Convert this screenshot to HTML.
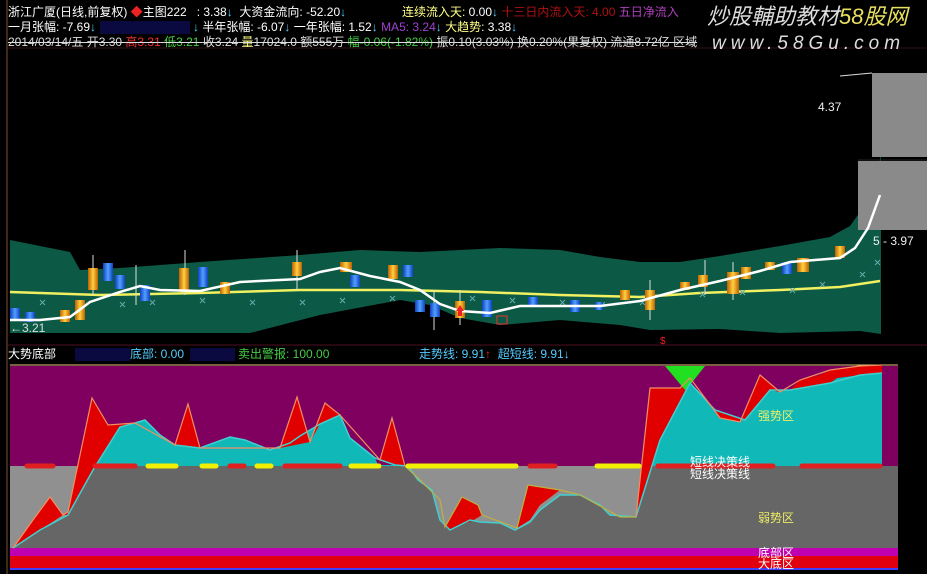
<!DOCTYPE html><html><head><meta charset="utf-8"><style>
body{margin:0;background:#000;width:927px;height:574px;overflow:hidden;position:relative;font-family:"Liberation Sans","Noto Sans CJK SC",sans-serif}
.t{position:absolute;font-size:12px;white-space:nowrap;line-height:13px}
</style></head><body>
<svg width="927" height="574" style="position:absolute;left:0;top:0">
<defs><linearGradient id="og" x1="0" x2="1"><stop offset="0" stop-color="#c06000"/><stop offset=".5" stop-color="#ffd040"/><stop offset="1" stop-color="#c06000"/></linearGradient>
<linearGradient id="bg" x1="0" x2="1"><stop offset="0" stop-color="#1040c0"/><stop offset=".5" stop-color="#50a0ff"/><stop offset="1" stop-color="#1040c0"/></linearGradient></defs>
<line x1="7" y1="0" x2="7" y2="574" stroke="#805030"/>
<line x1="8" y1="48" x2="927" y2="48" stroke="#301010"/>
<polygon fill="#0c5a46" points="10,240 70,252 80,270 120,268 200,262 300,255 360,250 420,252 500,248 560,250 600,257 640,262 680,262 720,256 780,246 830,237 850,226 865,205 875,180 881,155 881,334 860,331 780,333 720,329 650,330 620,325 560,320 500,325 460,318 430,305 400,300 320,315 250,333 10,333"/>
<rect x="872" y="73" width="55" height="84" fill="#8a8a8a"/>
<rect x="858" y="161" width="69" height="69" fill="#8a8a8a"/>
<line x1="858" y1="160" x2="927" y2="160" stroke="#222"/>
<line x1="840" y1="76" x2="872" y2="73" stroke="#ddd"/>
<polyline fill="none" stroke="#f0f060" stroke-width="2.5" points="10,292 100,295 200,293 300,290 400,290 480,292 560,295 640,297 700,293 780,290 840,287 880,281"/>
<g fill="none" stroke="#6aa" stroke-width="1">
<path d="M40,300l5,5m0-5l-5,5M120,302l5,5m0-5l-5,5M150,300l5,5m0-5l-5,5M200,298l5,5m0-5l-5,5M250,300l5,5m0-5l-5,5M300,300l5,5m0-5l-5,5M340,298l5,5m0-5l-5,5M390,296l5,5m0-5l-5,5M470,296l5,5m0-5l-5,5M510,298l5,5m0-5l-5,5M560,300l5,5m0-5l-5,5M600,302l5,5m0-5l-5,5M640,300l5,5m0-5l-5,5M700,292l5,5m0-5l-5,5M740,290l5,5m0-5l-5,5M790,288l5,5m0-5l-5,5M820,282l5,5m0-5l-5,5M860,272l5,5m0-5l-5,5M875,260l5,5m0-5l-5,5"/></g>
<g stroke="#ddd">
<line x1="93" y1="255" x2="93" y2="295"/><line x1="185" y1="250" x2="185" y2="295"/><line x1="297" y1="250" x2="297" y2="290"/><line x1="460" y1="290" x2="460" y2="325"/><line x1="650" y1="280" x2="650" y2="320"/><line x1="705" y1="260" x2="705" y2="295"/><line x1="733" y1="262" x2="733" y2="300"/><line x1="136" y1="265" x2="136" y2="305"/><line x1="434" y1="290" x2="434" y2="330"/>
</g>
<g fill="url(#og)">
<rect x="88" y="268" width="10" height="22"/><rect x="179" y="268" width="10" height="24"/><rect x="292" y="262" width="10" height="14"/><rect x="388" y="265" width="10" height="14"/><rect x="455" y="301" width="10" height="17"/><rect x="645" y="290" width="10" height="20"/><rect x="698" y="275" width="10" height="12"/><rect x="727" y="272" width="12" height="22"/><rect x="741" y="267" width="10" height="12"/><rect x="765" y="262" width="10" height="8"/><rect x="797" y="258" width="12" height="14"/><rect x="835" y="246" width="10" height="12"/><rect x="60" y="310" width="10" height="12"/><rect x="75" y="300" width="10" height="20"/><rect x="220" y="282" width="10" height="12"/><rect x="340" y="262" width="12" height="10"/><rect x="620" y="290" width="10" height="10"/><rect x="680" y="282" width="10" height="8"/>
</g>
<g fill="url(#bg)">
<rect x="103" y="263" width="10" height="18"/><rect x="115" y="275" width="10" height="14"/><rect x="140" y="285" width="10" height="16"/><rect x="198" y="267" width="10" height="20"/><rect x="350" y="275" width="10" height="12"/><rect x="403" y="265" width="10" height="12"/><rect x="415" y="300" width="10" height="12"/><rect x="430" y="303" width="10" height="14"/><rect x="482" y="300" width="10" height="17"/><rect x="528" y="297" width="10" height="10"/><rect x="570" y="300" width="10" height="12"/><rect x="782" y="262" width="10" height="12"/><rect x="10" y="308" width="10" height="12"/><rect x="25" y="312" width="10" height="10"/><rect x="595" y="302" width="8" height="8"/>
</g>
<rect x="497" y="316" width="10" height="8" fill="none" stroke="#e33"/>
<polyline fill="none" stroke="#fff" stroke-width="2.5" points="10,320 40,320 70,317 90,302 120,292 140,286 160,290 200,291 240,282 300,279 320,272 340,268 370,276 400,282 420,290 440,304 460,311 490,313 520,306 560,306 600,306 640,301 680,290 720,281 760,271 790,262 840,258 855,248 868,228 880,195"/>
<path d="M456,311l4,-6l4,6h-2v5h-4v-5z" fill="#e22"/>
<text x="660" y="344" fill="#e22" font-size="10">$</text>
<line x1="8" y1="345" x2="927" y2="345" stroke="#501020"/>
<!-- lower panel -->
<rect x="10" y="366" width="888" height="100" fill="#800060"/>
<rect x="10" y="466" width="888" height="82" fill="#666"/>
<rect x="10" y="548" width="888" height="8" fill="#c000b0"/>
<rect x="10" y="556" width="888" height="12" fill="#e00010"/>
<rect x="10" y="568" width="888" height="2" fill="#4040ff"/>
<line x1="10" y1="365" x2="898" y2="365" stroke="#f0c080"/>
<polygon fill="#909090" points="10,466 93,466 93,470 68,515 40,530 13,548 10,548"/>
<polygon fill="#909090" points="408,466 645,466 636,517 610,515 600,505 580,495 560,495 540,510 530,522 515,530 500,523 480,522 470,520 460,525 450,530 440,520 432,490 418,480"/>
<polygon fill="#10b8b8" points="93,466 120,427 135,423 145,420 160,435 175,445 200,448 230,437 245,440 270,450 290,443 300,436 320,424 340,415 350,438 375,458 378,465 395,465 408,466"/>
<polygon fill="#10b8b8" points="648,466 660,440 690,383 715,410 725,415 745,420 770,390 790,390 830,383 837,378 860,375 882,373 882,466"/>
<polygon fill="#e00000" points="13,548 33,520 50,497 63,515 40,530"/>
<polygon fill="#e00000" points="63,515 68,512 92,398 108,425 135,423 120,427 93,470 68,515"/>
<polygon fill="#e00000" points="175,445 188,404 200,448"/>
<polygon fill="#e00000" points="280,448 297,397 310,442"/>
<polygon fill="#e00000" points="310,442 325,403 340,415 320,424"/>
<polygon fill="#e00000" points="380,460 392,418 405,466 395,465"/>
<polygon fill="#e00000" points="445,527 462,497 478,505 482,515 472,521 460,525 450,530"/>
<polygon fill="#e00000" points="517,528 528,485 560,490 540,505 530,520"/>
<polygon fill="#e00000" points="636,517 650,388 680,388 690,383 660,440"/>
<polygon fill="#e00000" points="715,410 720,418 740,422 760,375 780,392 770,390 745,420"/>
<polygon fill="#e00000" points="790,390 800,380 820,375 830,370 860,366 882,365 882,373 860,375 837,378 830,383"/>
<polygon fill="#20e020" points="665,366 705,366 690,385 685,390"/>
<polyline fill="none" stroke="#40d0d0" stroke-width="1.5" points="13,548 40,530 68,515 93,470 120,427 135,423 145,420 160,435 175,445 200,448 230,437 245,440 270,450 290,443 300,436 320,424 340,415 350,438 375,458 395,465 408,466 418,480 432,490 440,520 450,530 460,525 470,520 480,522 500,523 515,530 530,522 540,510 560,495 580,495 600,505 610,515 636,517 660,440 690,383 715,410 745,420 770,390 790,390 830,383 860,375 882,373"/>
<polyline fill="none" stroke="#f09060" stroke-width="1.2" points="13,548 33,520 50,497 63,515 68,512 92,398 108,425 135,423 175,445 188,404 200,448 280,448 297,397 310,442 325,403 340,415 380,460 392,418 405,466"/>
<polyline fill="none" stroke="#c0b040" stroke-width="1.2" points="405,466 418,478 440,500 445,527 462,497 478,505 482,515 517,528 528,485 560,490 580,495 620,517 636,517"/>
<polyline fill="none" stroke="#f09060" stroke-width="1.2" points="636,517 650,388 680,388 690,378 720,418 740,422 760,375 780,392 800,380 830,370 860,366 882,365"/>
<g stroke-width="5" stroke-linecap="round">
<path stroke="#e02020" d="M27,466h26M95,466h40M230,466h14M285,466h55M530,466h25M658,466h115M802,466h78"/>
<path stroke="#f0f000" d="M148,466h28M202,466h14M257,466h14M351,466h28M408,466h108M597,466h42"/>
</g>
</svg>
<div class="t" style="left:8px;top:6px;color:#fff">浙江广厦(日线,前复权) <span style="color:#e22">◆</span>主图222 &nbsp;&nbsp;: 3.38<span style="color:#5cf">↓</span> &nbsp;大资金流向: -52.20<span style="color:#5cf">↓</span></div>
<div class="t" style="left:402px;top:6px;color:#ff8">连续流入天: <span style="color:#fff">0.00<span style="color:#5cf">↓</span></span> <span style="color:#b01010">十三日内流入天: 4.00</span> <span style="color:#b040c0">五日净流入</span></div>
<div class="t" style="left:8px;top:21px;color:#fff">一月张幅: -7.69<span style="color:#5cf">↓</span></div>
<div class="t" style="left:100px;top:21px;color:#2030a0;background:#0a0a40;width:90px">&nbsp;</div>
<div class="t" style="left:193px;top:21px;color:#fff"><span style="color:#5cf">↓</span> 半年张幅: -6.07<span style="color:#5cf">↓</span> 一年张幅: 1.52<span style="color:#5cf">↓</span> <span style="color:#a040d0">MA5: 3.24</span><span style="color:#5cf">↓</span> <span style="color:#ff8">大趋势</span>: 3.38<span style="color:#5cf">↓</span></div>
<div class="t" style="left:8px;top:36px;color:#ddd;text-decoration:line-through">2014/03/14/五 开3.30 <span style="color:#e33">高3.31</span> <span style="color:#4c4">低3.21</span> <span style="color:#ddd">收3.24</span> <span style="color:#ff8">量</span>17024.0 额555万 <span style="color:#4c4">幅-0.06(-1.82%)</span> 振0.10(3.03%) 换0.20%(果复权) 流通8.72亿 区域</div>
<div class="t" style="left:707px;top:5px;font-size:22px;line-height:24px;font-style:italic;color:#ddd">炒股輔助教材<span style="color:#e8e060">58股网</span></div>
<div class="t" style="left:712px;top:34px;font-size:19px;line-height:20px;font-style:italic;color:#ddd;letter-spacing:5px">www.58Gu.com</div>
<div class="t" style="left:818px;top:101px;color:#eee">4.37</div>
<div class="t" style="left:873px;top:235px;color:#eee">5 - 3.97</div>
<div class="t" style="left:10px;top:322px;color:#ddd">←3.21</div>
<div class="t" style="left:8px;top:348px;color:#fff">大势底部</div>
<div class="t" style="left:75px;top:348px;color:#2030a0;background:#0a0a40;width:55px">&nbsp;</div>
<div class="t" style="left:130px;top:348px;color:#5cf">底部: 0.00</div>
<div class="t" style="left:190px;top:348px;color:#2030a0;background:#0a0a40;width:45px">&nbsp;</div>
<div class="t" style="left:238px;top:348px;color:#4c4">卖出警报: 100.00</div>
<div class="t" style="left:419px;top:348px;color:#5cf">走势线: 9.91<span style="color:#e22">↑</span> &nbsp;超短线: 9.91↓</div>
<div class="t" style="left:690px;top:456px;color:#fff">短线决策线</div>
<div class="t" style="left:690px;top:468px;color:#fff">短线决策线</div>
<div class="t" style="left:758px;top:410px;color:#ee6">强势区</div>
<div class="t" style="left:758px;top:512px;color:#ee6">弱势区</div>
<div class="t" style="left:758px;top:547px;color:#fff">底部区</div>
<div class="t" style="left:758px;top:558px;color:#fff">大底区</div>
</body></html>
